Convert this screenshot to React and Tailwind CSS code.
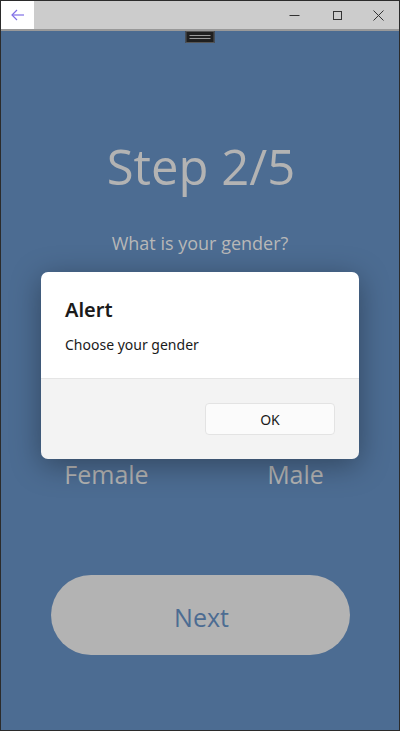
import React from "react";

export default function App() {
  return (
    <div className="relative w-[400px] h-[731px] border border-[#2b2b2b] flex flex-col overflow-hidden" style={{ fontFamily: '"Open Sans", "Noto Sans", sans-serif' }}>
      {/* title bar */}
      <div className="h-[28px] bg-[#cccccc] flex items-stretch">
        <div className="w-[33px] bg-white flex items-center justify-center">
          <svg width="14" height="12" viewBox="0 0 14 12" fill="none" stroke="#7f6ee6" strokeWidth="1.2">
            <path d="M6 1 L1 6 L6 11" />
            <path d="M1 6 H13" />
          </svg>
        </div>
        <div className="flex-1" />
        <div className="w-[46px] flex items-center justify-center">
          <svg width="11" height="11" viewBox="0 0 11 11" fill="none" stroke="#333" strokeWidth="1">
            <path d="M0.5 5.5 H10.5" />
          </svg>
        </div>
        <div className="w-[40px] flex items-center justify-center">
          <svg width="11" height="11" viewBox="0 0 11 11" fill="none" stroke="#333" strokeWidth="1">
            <rect x="1.5" y="1.5" width="8" height="8" />
          </svg>
        </div>
        <div className="w-[42px] flex items-center justify-center">
          <svg width="11" height="11" viewBox="0 0 11 11" fill="none" stroke="#333" strokeWidth="1">
            <path d="M0.5 0.5 L10.5 10.5 M10.5 0.5 L0.5 10.5" />
          </svg>
        </div>
      </div>
      <div className="h-[2px] bg-[#999999]" />

      {/* content */}
      <div className="relative flex-1 bg-[#4c6c92] flex flex-col items-center">
        <div className="absolute top-0 left-1/2 -translate-x-1/2 w-[29px] h-[12px] bg-[#1f1f1f] border border-[#555] flex flex-col items-center justify-center gap-[2px]">
          <div className="w-[21px] h-px bg-[#999]" />
          <div className="w-[21px] h-px bg-[#999]" />
        </div>

        <div className="mt-[101px] text-[49px] leading-[68px] text-[#b3b3b3] pl-[2px]">Step 2/5</div>
        <div className="mt-[31px] text-[18px] leading-[24px] text-[#b8b8b8]">What is your gender?</div>

        <div className="mt-[202px] w-full grid grid-cols-2 px-3 text-[25px] leading-[34px] text-[#b3b3b3]">
          <div className="text-center">Female</div>
          <div className="text-center pl-[4px]">Male</div>
        </div>

        <div className="mt-[84px] w-[299px] h-[80px] rounded-full bg-[#b3b3b3] flex items-center justify-center pt-[6px] pl-[3px] text-[25px] text-[#4c6c92]">
          Next
        </div>
      </div>

      {/* dialog */}
      <div className="absolute inset-0 flex items-center justify-center">
        <div className="w-[318px] h-[187px] rounded-[7px] overflow-hidden flex flex-col shadow-[0_6px_30px_rgba(0,0,0,0.35)]" style={{ fontFamily: '"Noto Sans", "Open Sans", sans-serif' }}>
          <div className="h-[106px] bg-white px-6 pt-6">
            <div className="text-[20px] leading-[28px] font-semibold text-[#1a1a1a]">Alert</div>
            <div className="mt-[11px] text-[14px] leading-[19px] text-[#1a1a1a]">Choose your gender</div>
          </div>
          <div className="h-px bg-[#e5e5e5]" />
          <div className="flex-1 bg-[#f3f3f3] flex justify-end items-start pt-6 pr-6">
            <div className="w-[130px] h-[32px] rounded-[4px] bg-[#fbfbfb] border border-[#e3e3e3] flex items-center justify-center text-[14px] text-[#1a1a1a]">
              OK
            </div>
          </div>
        </div>
      </div>
    </div>
  );
}
